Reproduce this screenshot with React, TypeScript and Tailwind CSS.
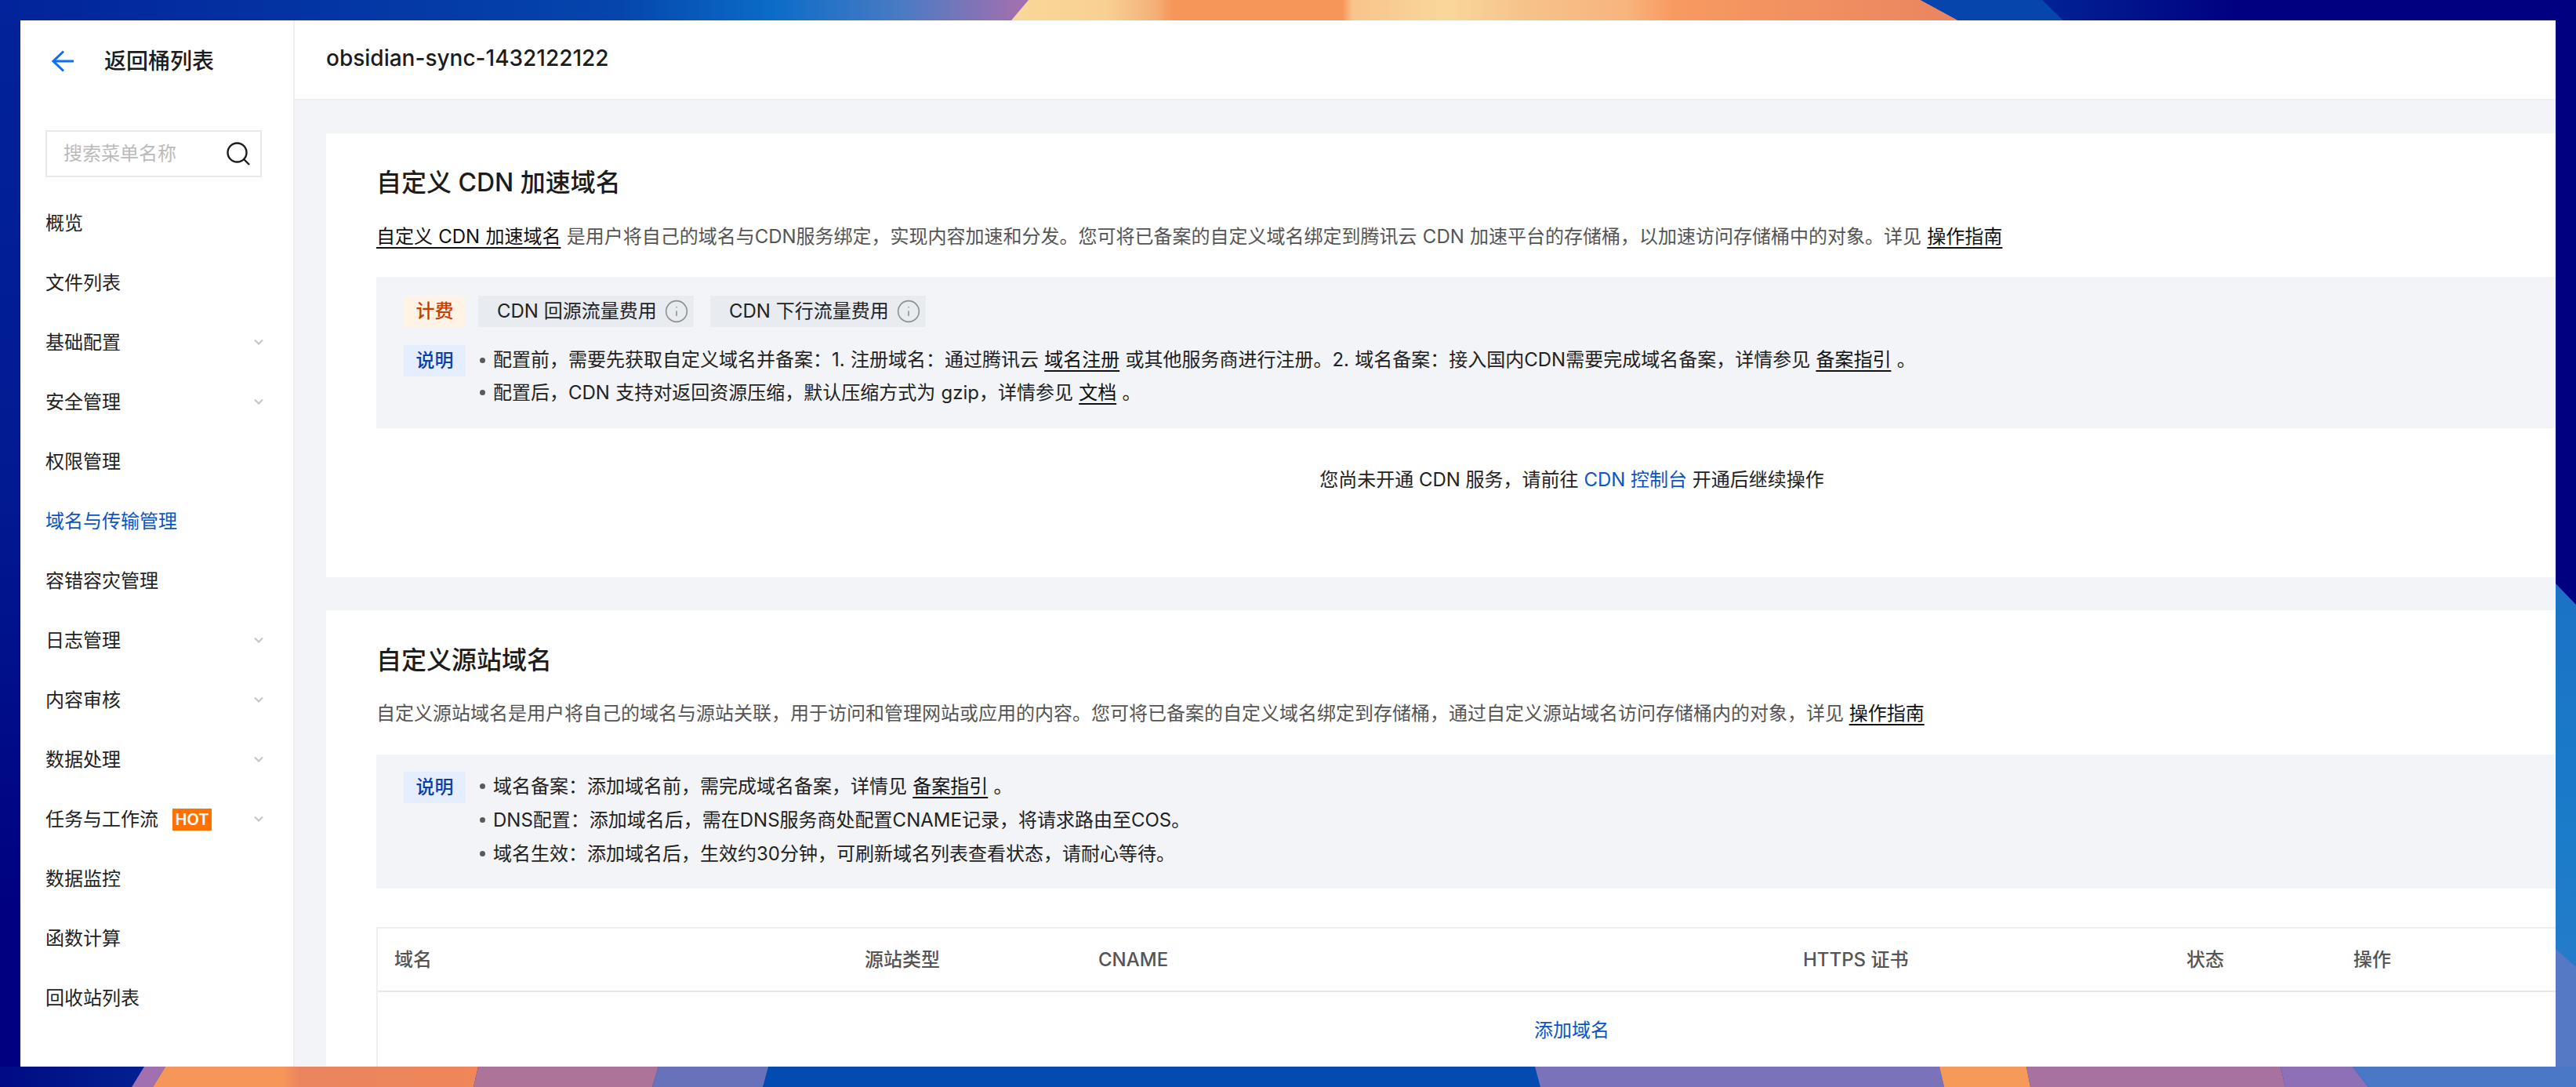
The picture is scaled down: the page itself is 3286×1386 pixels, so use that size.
import React from "react";
import { Info } from "lucide-react";

const menu = [
  { label: "概览" },
  { label: "文件列表" },
  { label: "基础配置", arrow: true },
  { label: "安全管理", arrow: true },
  { label: "权限管理" },
  { label: "域名与传输管理", active: true },
  { label: "容错容灾管理" },
  { label: "日志管理", arrow: true },
  { label: "内容审核", arrow: true },
  { label: "数据处理", arrow: true },
  { label: "任务与工作流", arrow: true, hot: true },
  { label: "数据监控" },
  { label: "函数计算" },
  { label: "回收站列表" },
];

// wallpaper behind the window, only its edges are visible
function Wallpaper() {
  return (
    <svg className="absolute inset-0" width="3286" height="1386" viewBox="0 0 3286 1386">
      <defs>
        <linearGradient id="left" x1="0" y1="0" x2="0" y2="1">
          <stop offset="0" stopColor="#02239b" />
          <stop offset="0.45" stopColor="#011a92" />
          <stop offset="0.85" stopColor="#000080" />
          <stop offset="1" stopColor="#000080" />
        </linearGradient>
        <linearGradient id="right" x1="0" y1="0" x2="0" y2="1">
          <stop offset="0" stopColor="#1c72c6" />
          <stop offset="0.5" stopColor="#1a7cca" />
          <stop offset="1" stopColor="#2f7ac8" />
        </linearGradient>
        <linearGradient id="top" gradientUnits="userSpaceOnUse" x1="0" y1="0" x2="3286" y2="0">
          <stop offset="0" stopColor="#02239b" />
          <stop offset="0.24" stopColor="#0545ac" />
          <stop offset="0.3" stopColor="#0b6cc8" />
          <stop offset="0.35" stopColor="#4a7bc2" />
          <stop offset="0.395" stopColor="#a070b0" />
          <stop offset="0.7" stopColor="#0545ac" />
          <stop offset="0.79" stopColor="#022496" />
          <stop offset="0.87" stopColor="#000080" />
          <stop offset="1" stopColor="#000080" />
        </linearGradient>
        <linearGradient id="peach" gradientUnits="userSpaceOnUse" x1="1290" y1="0" x2="2498" y2="0">
          <stop offset="0" stopColor="#fad79a" />
          <stop offset="0.1" stopColor="#f9d093" />
          <stop offset="0.15" stopColor="#f4b27a" />
          <stop offset="0.17" stopColor="#f79659" />
          <stop offset="0.35" stopColor="#f79659" />
          <stop offset="0.36" stopColor="#f8c48c" />
          <stop offset="0.46" stopColor="#f9d79b" />
          <stop offset="0.54" stopColor="#f6c38b" />
          <stop offset="0.65" stopColor="#f8b47d" />
          <stop offset="0.7" stopColor="#f79a60" />
          <stop offset="1" stopColor="#ea8560" />
        </linearGradient>
        <linearGradient id="bottom" gradientUnits="userSpaceOnUse" x1="0" y1="0" x2="3286" y2="0">
          <stop offset="0" stopColor="#000a84" />
          <stop offset="0.05" stopColor="#021f8f" />
          <stop offset="0.3" stopColor="#034bb0" />
          <stop offset="1" stopColor="#034bb0" />
        </linearGradient>
        <linearGradient id="orange" gradientUnits="userSpaceOnUse" x1="195" y1="0" x2="610" y2="0">
          <stop offset="0" stopColor="#f79659" />
          <stop offset="0.4" stopColor="#f79659" />
          <stop offset="0.45" stopColor="#ea8560" />
          <stop offset="1" stopColor="#f08659" />
        </linearGradient>
      </defs>
      <rect x="0" y="0" width="3286" height="1386" fill="url(#left)" />
      <rect x="3000" y="0" width="286" height="1386" fill="#000080" />
      <polygon points="3260,744 3286,771 3286,1386 3260,1386" fill="url(#right)" />
      <rect x="0" y="0" width="3286" height="26" fill="url(#top)" />
      <polygon points="1312,0 2450,0 2498,26 1290,26" fill="url(#peach)" />
      <polygon points="2450,0 2605,0 2632,26 2498,26" fill="#0545ac" />
      <rect x="0" y="1360" width="3286" height="26" fill="url(#bottom)" />
      <polygon points="184,1360 211,1360 195,1386 168,1386" fill="#a070b0" />
      <polygon points="211,1360 610,1360 604,1386 195,1386" fill="url(#orange)" />
      <polygon points="610,1360 840,1360 832,1386 604,1386" fill="#ad7399" />
      <polygon points="840,1360 980,1360 973,1386 832,1386" fill="#6872bb" />
      <polygon points="1958,1360 2474,1360 2480,1386 1965,1386" fill="#7a73bb" />
      <polygon points="2474,1360 2585,1360 2590,1386 2480,1386" fill="#f69a5a" />
      <polygon points="2585,1360 2909,1360 2915,1386 2590,1386" fill="#a6739f" />
      <polygon points="2909,1360 3001,1360 3021,1386 2915,1386" fill="#8d70b5" />
      <polygon points="3001,1360 3286,1360 3286,1386 3021,1386" fill="#4a78c6" />
      <polygon points="3260,1210 3286,1233 3286,1360 3260,1360" fill="#5679c6" />
    </svg>
  );
}

function Chevron() {
  return (
    <svg width="12" height="8" viewBox="0 0 12 8" fill="none" stroke="#c8c8c8" strokeWidth="2.2" className="mb-[2px] mr-[6px]">
      <path d="M1 1.5 L6 6.5 L11 1.5" />
    </svg>
  );
}

function Sidebar() {
  return (
    <aside className="w-[350px] shrink-0 border-r-2 border-[#eeeeee] bg-white px-[32px]">
      <div className="flex h-[104px] items-center">
        <svg width="28" height="28" viewBox="0 0 28 28" fill="none" stroke="#0d6efd" strokeWidth="3" className="ml-[8px]">
          <path d="M15 1.5 L2 14 L15 26.5 M2 14 H28" />
        </svg>
        <span className="ml-[39px] text-[28px] font-medium leading-none text-[#1c1c1c]">返回桶列表</span>
      </div>
      <div className="mt-[36px] flex h-[60px] w-[276px] items-center justify-between border-2 border-[#e8e8e8] pl-[21px] pr-[13px]">
        <span className="text-[24px] leading-none text-[#bbbbbb]">搜索菜单名称</span>
        <svg width="30" height="30" viewBox="0 0 30 30" fill="none" stroke="#1c1c1c" strokeWidth="2.4">
          <circle cx="13.5" cy="13.5" r="12" />
          <path d="M22 22 L29 29" />
        </svg>
      </div>
      <ul className="mt-[21px]">
        {menu.map((m) => (
          <li key={m.label} className="flex h-[76px] items-center justify-between">
            <span className="flex items-center">
              <span className={m.active ? "text-[24px] text-[#0b55c5]" : "text-[24px] text-[#222222]"}>{m.label}</span>
              {m.hot && (
                <span className="ml-[18px] flex h-[28px] w-[50px] items-center justify-center bg-[#ff7200] text-[20px] font-semibold leading-none text-white">
                  HOT
                </span>
              )}
            </span>
            {m.arrow && <Chevron />}
          </li>
        ))}
      </ul>
    </aside>
  );
}

function Tag({ color, children }: { color: string; children: React.ReactNode }) {
  return (
    <span className={`flex h-[40px] w-[79px] shrink-0 items-center justify-center text-[24px] font-medium leading-none ${color}`}>
      {children}
    </span>
  );
}

function Chip({ children }: { children: React.ReactNode }) {
  return (
    <span className="flex h-[40px] w-[275px] items-center gap-[9px] bg-[#e8ebf0] pl-[24px] text-[24px] leading-none text-[#222222]">
      {children}
      <Info size={32} strokeWidth={1.2} className="text-[#8f8f8f]" />
    </span>
  );
}

function Bullet({ lh, children }: { lh: string; children: React.ReactNode }) {
  return (
    <li className={`flex items-center text-[24px] [word-spacing:0.5px] text-[#222222] ${lh}`}>
      <span className="mr-[10px] h-[7px] w-[7px] shrink-0 rounded-full bg-[#5a5a5a]" />
      <span>{children}</span>
    </li>
  );
}

function A({ children }: { children: React.ReactNode }) {
  return <span className="text-[#111111] underline underline-offset-[5px]">{children}</span>;
}

function CdnCard() {
  return (
    <section className="h-[566px] w-[3178px] bg-white px-[64px] pt-[41px]">
      <h2 className="text-[32px] font-medium leading-[44px] text-[#1c1c1c]">自定义 CDN 加速域名</h2>
      <p className="mt-[29px] text-[24px] leading-[36px] [word-spacing:0.5px] text-[#555555]">
        <A>自定义 CDN 加速域名</A> 是用户将自己的域名与CDN服务绑定，实现内容加速和分发。您可将已备案的自定义域名绑定到腾讯云 CDN 加速平台的存储桶，以加速访问存储桶中的对象。详见 <A>操作指南</A>
      </p>
      <div className="mt-[33px] h-[193px] bg-[#f3f4f7] px-[35px] pt-[24px]">
        <div className="flex items-center">
          <Tag color="bg-[#fff3e6] text-[#c73e00]">计费</Tag>
          <div className="ml-[16px] flex gap-[21px]">
            <Chip>CDN 回源流量费用</Chip>
            <Chip>CDN 下行流量费用</Chip>
          </div>
        </div>
        <div className="mt-[23px] flex items-start">
          <Tag color="bg-[#e5eeff] text-[#0a3ea8]">说明</Tag>
          <ul className="ml-[18px] mt-[-2px]">
            <Bullet lh="leading-[42px]">
              配置前，需要先获取自定义域名并备案：1. 注册域名：通过腾讯云 <A>域名注册</A> 或其他服务商进行注册。2. 域名备案：接入国内CDN需要完成域名备案，详情参见 <A>备案指引</A> 。
            </Bullet>
            <Bullet lh="leading-[41px]">
              配置后，CDN 支持对返回资源压缩，默认压缩方式为 gzip，详情参见 <A>文档</A> 。
            </Bullet>
          </ul>
        </div>
      </div>
      <p className="mt-[48px] text-center text-[24px] leading-[36px] text-[#222222]">
        您尚未开通 CDN 服务，请前往 <span className="text-[#0b55c5]">CDN 控制台</span> 开通后继续操作
      </p>
    </section>
  );
}

function OriginCard() {
  return (
    <section className="mt-[42px] w-[3178px] bg-white px-[64px] pt-[42px]">
      <h2 className="text-[32px] font-medium leading-[44px] text-[#1c1c1c]">自定义源站域名</h2>
      <p className="mt-[28px] text-[24px] leading-[36px] text-[#555555]">
        自定义源站域名是用户将自己的域名与源站关联，用于访问和管理网站或应用的内容。您可将已备案的自定义域名绑定到存储桶，通过自定义源站域名访问存储桶内的对象，详见 <A>操作指南</A>
      </p>
      <div className="mt-[34px] flex h-[171px] items-start bg-[#f3f4f7] px-[35px] pt-[22px]">
        <Tag color="bg-[#e5eeff] text-[#0a3ea8]">说明</Tag>
        <ul className="ml-[18px] mt-[-3px]">
          <Bullet lh="leading-[43px]">
            域名备案：添加域名前，需完成域名备案，详情见 <A>备案指引</A> 。
          </Bullet>
          <Bullet lh="leading-[43px]">DNS配置：添加域名后，需在DNS服务商处配置CNAME记录，将请求路由至COS。</Bullet>
          <Bullet lh="leading-[43px]">域名生效：添加域名后，生效约30分钟，可刷新域名列表查看状态，请耐心等待。</Bullet>
        </ul>
      </div>
      <div className="mt-[49px] border-2 border-[#eeeeee]">
        <div className="grid h-[81px] grid-cols-[600px_298px_899px_489px_213px_1fr] items-center border-b-2 border-[#e8e8e8] pl-[21px] text-[24px] font-medium text-[#555555]">
          <span>域名</span>
          <span>源站类型</span>
          <span>CNAME</span>
          <span>HTTPS 证书</span>
          <span>状态</span>
          <span>操作</span>
        </div>
        <div className="h-[160px] pt-[31px] text-center text-[24px] leading-[36px] text-[#0b55c5]">添加域名</div>
      </div>
    </section>
  );
}

export default function App() {
  return (
    <div className="relative h-[1386px] w-[3286px] overflow-hidden p-[26px] font-['Inter','Noto_Sans_CJK_SC',sans-serif]">
      <Wallpaper />
      <div className="relative flex h-full w-full overflow-hidden bg-white">
        <Sidebar />
        <main className="flex min-w-0 flex-1 flex-col">
          <header className="flex h-[102px] shrink-0 items-center border-b-2 border-[#eeeeee] bg-white px-[40px] pb-[4px]">
            <span className="text-[28px] font-medium leading-none text-[#1c1c1c]">obsidian-sync-1432122122</span>
          </header>
          <div className="flex-1 overflow-hidden bg-[#f3f4f7] pl-[40px] pt-[42px]">
            <CdnCard />
            <OriginCard />
          </div>
        </main>
      </div>
    </div>
  );
}
